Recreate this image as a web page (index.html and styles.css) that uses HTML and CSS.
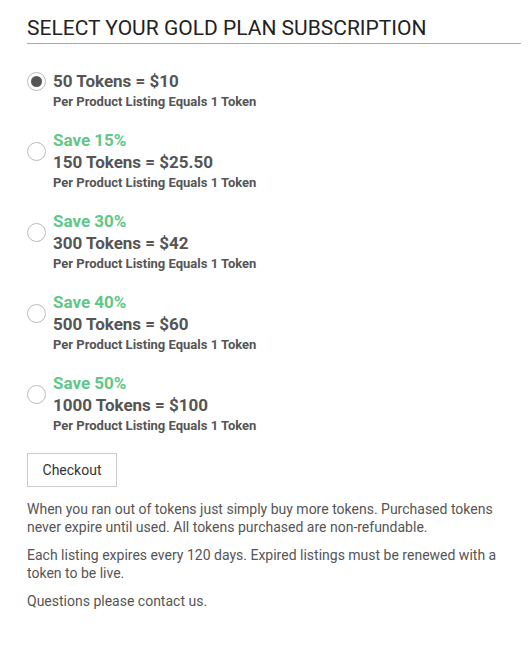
FILE: index.html
```html
<!DOCTYPE html>
<html lang="en">
<head>
  <meta charset="UTF-8">
  <title>Gold Plan Subscription</title>
  <link rel="stylesheet" href="styles.css">
</head>
<body>

<div class="wrap">
  <h1>SELECT YOUR GOLD PLAN SUBSCRIPTION</h1>

  <div class="plans">
    <label class="plan">
      <div class="plan-head">
        <span class="radio checked"></span>
        <div class="plan-text">
          <div class="title">50 Tokens = $10</div>
        </div>
      </div>
      <div class="sub">Per Product Listing Equals 1 Token</div>
    </label>

    <label class="plan">
      <div class="plan-head">
        <span class="radio"></span>
        <div class="plan-text">
          <div class="save">Save 15%</div>
          <div class="title">150 Tokens = $25.50</div>
        </div>
      </div>
      <div class="sub">Per Product Listing Equals 1 Token</div>
    </label>

    <label class="plan">
      <div class="plan-head">
        <span class="radio"></span>
        <div class="plan-text">
          <div class="save">Save 30%</div>
          <div class="title">300 Tokens = $42</div>
        </div>
      </div>
      <div class="sub">Per Product Listing Equals 1 Token</div>
    </label>

    <label class="plan">
      <div class="plan-head">
        <span class="radio"></span>
        <div class="plan-text">
          <div class="save">Save 40%</div>
          <div class="title">500 Tokens = $60</div>
        </div>
      </div>
      <div class="sub">Per Product Listing Equals 1 Token</div>
    </label>

    <label class="plan">
      <div class="plan-head">
        <span class="radio"></span>
        <div class="plan-text">
          <div class="save">Save 50%</div>
          <div class="title">1000 Tokens = $100</div>
        </div>
      </div>
      <div class="sub">Per Product Listing Equals 1 Token</div>
    </label>
  </div>

  <button class="checkout">Checkout</button>

  <p>When you ran out of tokens just simply buy more tokens. Purchased tokens never expire until used. All tokens purchased are non-refundable.</p>
  <p>Each listing expires every 120 days. Expired listings must be renewed with a token to be live.</p>
  <p>Questions please contact us.</p>
</div>

</body>
</html>
```

FILE: styles.css
```css
body {
  font-family: Roboto, "Liberation Sans", Arial, sans-serif;
  background-color: #fff;
  color: #555;
  margin: 0;
  padding: 0;
}

.wrap {
  width: 494px;
  padding-left: 27px;
}

h1 {
  font-size: 21px;
  font-weight: 400;
  line-height: 25px;
  color: #222;
  margin: 16px 0 0 0;
  padding-bottom: 2px;
  border-bottom: 1px solid #aaa;
}

.plans {
  display: flex;
  flex-direction: column;
  gap: 17px;
  margin-top: 26px;
}

.plan {
  display: block;
  cursor: pointer;
}

.plan-head {
  display: flex;
  align-items: center;
}

.radio {
  width: 19px;
  height: 19px;
  border: 1px solid #bbb;
  border-radius: 50%;
  box-sizing: border-box;
  margin-right: 7px;
  display: flex;
  align-items: center;
  justify-content: center;
  flex-shrink: 0;
}

.radio.checked::after {
  content: "";
  width: 11px;
  height: 11px;
  border-radius: 50%;
  background-color: #555;
}

.save,
.title {
  font-size: 17px;
  font-weight: 700;
  line-height: 22px;
}

.save {
  color: #5fc887;
}

.title {
  color: #555;
}

.sub {
  font-size: 13px;
  font-weight: 700;
  line-height: 20px;
  color: #555;
  padding-left: 26px;
}

.checkout {
  display: block;
  margin-top: 17px;
  width: 90px;
  height: 34px;
  background: #fff;
  border: 1px solid #ccc;
  font-family: inherit;
  font-size: 14px;
  color: #333;
  cursor: pointer;
}

p {
  font-size: 14px;
  line-height: 18px;
  margin: 13px 0 0 0;
}

p + p {
  margin-top: 10px;
}
```
